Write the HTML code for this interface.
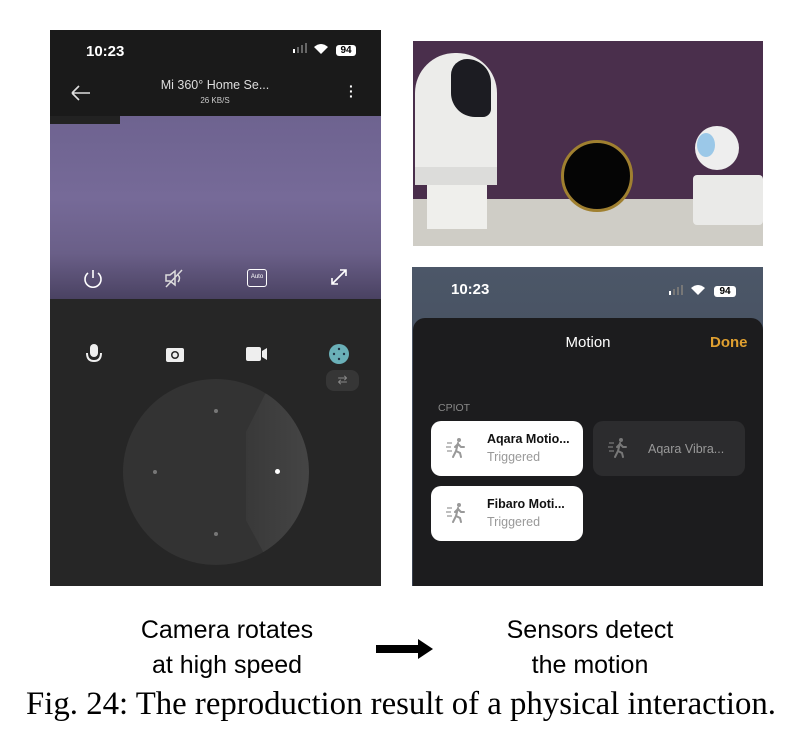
<!DOCTYPE html>
<html><head><meta charset="utf-8"><style>
*{margin:0;padding:0;box-sizing:border-box}
body{width:802px;height:734px;background:#fff;position:relative;overflow:hidden;font-family:"Liberation Sans",sans-serif}
.a{position:absolute}
.w{color:#fff}
</style></head><body>
<!-- left phone -->
<div class="a" style="left:50px;top:30px;width:331px;height:556px;background:#262626"></div>
<div class="a" style="left:50px;top:30px;width:331px;height:86px;background:#1a1a1a"></div>
<div class="a w" style="left:86px;top:43px;font-size:15px;font-weight:bold">10:23</div>
<div class="a" style="left:293px;top:49px;width:2px;height:4px;background:#fff"></div>
<div class="a" style="left:297px;top:47px;width:2px;height:6px;background:#666"></div>
<div class="a" style="left:301px;top:45px;width:2px;height:8px;background:#666"></div>
<div class="a" style="left:305px;top:43px;width:2px;height:10px;background:#666"></div>
<svg class="a" style="left:313px;top:43px" width="16" height="12"><path d="M8 11L1 4Q8 -2 15 4Z" fill="#fff"/></svg>
<div class="a" style="left:336px;top:45px;width:20px;height:11px;background:#fff;border-radius:3px;font-size:10px;font-weight:bold;text-align:center;line-height:11px;color:#000">94</div>
<svg class="a" style="left:70px;top:84px" width="22" height="18"><path d="M2 9H20M2 9L9 2M2 9L9 16" stroke="#ddd" stroke-width="1.6" fill="none"/></svg>
<div class="a" style="left:130px;top:78px;width:170px;text-align:center;color:#ddd;font-size:12.5px">Mi 360° Home Se...</div>
<div class="a" style="left:130px;top:96px;width:170px;text-align:center;color:#ccc;font-size:8px">26 KB/S</div>
<div class="a w" style="left:349px;top:84px;font-size:14px;font-weight:bold;line-height:5px">·<br>·<br>·</div>
<div class="a" style="left:50px;top:116px;width:331px;height:183px;background:linear-gradient(180deg,#6e6390 0%,#766a98 45%,#6a5f88 75%,#4a4262 100%)"></div>
<div class="a" style="left:50px;top:116px;width:70px;height:8px;background:#222"></div>
<svg class="a" style="left:82px;top:267px" width="22" height="22"><path d="M6 6A8 8 0 1 0 16 6M11 3V11" stroke="#fff" stroke-width="1.6" fill="none"/></svg>
<svg class="a" style="left:163px;top:267px" width="22" height="22"><path d="M3 8H7L12 4V18L7 14H3ZM3 20L19 3M15 8Q18 11 15 15" stroke="#ddd" stroke-width="1.5" fill="none"/></svg>
<div class="a" style="left:247px;top:269px;width:20px;height:18px;border:1.5px solid #fff;border-radius:3px;color:#fff;font-size:6px;text-align:center;line-height:15px">Auto</div>
<svg class="a" style="left:329px;top:267px" width="20" height="20"><path d="M3 17L17 3M11 3H17V9M3 11V17H9" stroke="#fff" stroke-width="1.6" fill="none"/></svg>
<svg class="a" style="left:84px;top:343px" width="20" height="22"><rect x="6" y="1" width="8" height="13" rx="4" fill="#eee"/><path d="M3 10Q3 18 10 18Q17 18 17 10" stroke="#eee" stroke-width="2" fill="none"/></svg>
<svg class="a" style="left:165px;top:345px" width="20" height="18"><rect x="1" y="3" width="18" height="14" rx="2" fill="#eee"/><circle cx="10" cy="10" r="4" fill="#262626"/><circle cx="10" cy="10" r="2.5" fill="#eee"/></svg>
<svg class="a" style="left:245px;top:345px" width="24" height="18"><rect x="1" y="2" width="15" height="14" rx="2" fill="#eee"/><path d="M17 6L22 3V15L17 12Z" fill="#eee"/></svg>
<svg class="a" style="left:329px;top:344px" width="20" height="20"><circle cx="10" cy="10" r="10" fill="#6ab0b8"/><circle cx="10" cy="5" r="1.2" fill="#234"/><circle cx="10" cy="15" r="1.2" fill="#234"/><circle cx="5" cy="10" r="1.2" fill="#234"/><circle cx="15" cy="10" r="1.2" fill="#234"/></svg>
<div class="a" style="left:326px;top:370px;width:33px;height:21px;border-radius:8px;background:#363636;color:#888;font-size:12px;text-align:center;line-height:21px">⇄</div>
<div class="a" style="left:123px;top:379px;width:186px;height:186px;border-radius:50%;background:#333;overflow:hidden">
 <div class="a" style="left:123px;top:-10px;width:80px;height:210px;background:linear-gradient(90deg,#393939,#484848);clip-path:polygon(40% 0,100% 0,100% 100%,40% 100%,0 72%,0 30%)"></div>
</div>
<div class="a" style="left:214px;top:409px;width:4px;height:4px;border-radius:50%;background:#777"></div>
<div class="a" style="left:153px;top:470px;width:4px;height:4px;border-radius:50%;background:#777"></div>
<div class="a" style="left:214px;top:532px;width:4px;height:4px;border-radius:50%;background:#777"></div>
<div class="a" style="left:275px;top:469px;width:5px;height:5px;border-radius:50%;background:#fff"></div>
<!-- photo -->
<div class="a" style="left:413px;top:41px;width:350px;height:205px;background:#4a2f4c;overflow:hidden">
 <div class="a" style="left:0;top:158px;width:350px;height:47px;background:#cfcdc6"></div>
 <div class="a" style="left:2px;top:12px;width:82px;height:128px;background:#ececea;border-radius:40px 40px 6px 6px"></div>
 <div class="a" style="left:2px;top:126px;width:82px;height:18px;background:#dcdcda"></div>
 <div class="a" style="left:38px;top:18px;width:40px;height:58px;background:#1c1c22;border-radius:20px 30px 10px 30px"></div>
 <div class="a" style="left:14px;top:144px;width:60px;height:44px;background:#efefec"></div>
 <div class="a" style="left:148px;top:99px;width:72px;height:72px;border-radius:50%;background:#050505;border:3px solid #a08030"></div>
 <div class="a" style="left:282px;top:85px;width:44px;height:44px;border-radius:50%;background:#eee"></div>
 <div class="a" style="left:284px;top:92px;width:18px;height:24px;border-radius:50%;background:#9bc8e8"></div>
 <div class="a" style="left:280px;top:134px;width:70px;height:50px;background:#eaeae8;border-radius:4px"></div>
</div>
<!-- right phone -->
<div class="a" style="left:412px;top:267px;width:351px;height:319px;background:linear-gradient(180deg,#4c5768,#3a4250)"></div>
<div class="a" style="left:413px;top:318px;width:350px;height:268px;background:#1c1c1e;border-radius:12px 12px 0 0"></div>
<div class="a w" style="left:451px;top:281px;font-size:15px;font-weight:bold">10:23</div>
<div class="a" style="left:669px;top:291px;width:2px;height:4px;background:#fff"></div>
<div class="a" style="left:673px;top:289px;width:2px;height:6px;background:#777"></div>
<div class="a" style="left:677px;top:287px;width:2px;height:8px;background:#777"></div>
<div class="a" style="left:681px;top:285px;width:2px;height:10px;background:#777"></div>
<svg class="a" style="left:690px;top:284px" width="16" height="12"><path d="M8 11L1 4Q8 -2 15 4Z" fill="#fff"/></svg>
<div class="a" style="left:714px;top:286px;width:22px;height:11px;background:#fff;border-radius:3px;font-size:10px;font-weight:bold;text-align:center;line-height:11px;color:#000">94</div>
<div class="a w" style="left:540px;top:334px;width:96px;text-align:center;font-size:15px">Motion</div>
<div class="a" style="left:710px;top:334px;font-size:15px;color:#e0a030;font-weight:bold">Done</div>
<div class="a" style="left:438px;top:402px;font-size:10.5px;color:#888">CPIOT</div>
<div class="a" style="left:431px;top:421px;width:152px;height:55px;background:#fff;border-radius:10px"></div>
<div class="a" style="left:593px;top:421px;width:152px;height:55px;background:#2c2c2e;border-radius:10px"></div>
<div class="a" style="left:431px;top:486px;width:152px;height:55px;background:#fff;border-radius:10px"></div>
<svg width="0" height="0" style="position:absolute"><defs><g id="wk"><path d="M1 6H6M0 10H5M1 14H6" stroke-width="1.2"/><circle cx="13" cy="3" r="2" stroke="none"/><path d="M12 6L10 14L7 20M10 14L14 16L15 20M12 7L9 10M12 7L15 10L18 10" stroke-width="2" fill="none" stroke-linecap="round"/></g></defs></svg>
<svg class="a" style="left:446px;top:437px" width="20" height="22"><use href="#wk" stroke="#999" fill="#999"/></svg>
<svg class="a" style="left:608px;top:437px" width="20" height="22"><use href="#wk" stroke="#777" fill="#777"/></svg>
<svg class="a" style="left:446px;top:502px" width="20" height="22"><use href="#wk" stroke="#999" fill="#999"/></svg>
<div class="a" style="left:487px;top:432px;font-size:12.5px;font-weight:bold;color:#111">Aqara Motio...</div>
<div class="a" style="left:487px;top:450px;font-size:12.5px;color:#999">Triggered</div>
<div class="a" style="left:648px;top:442px;font-size:12.5px;color:#999">Aqara Vibra...</div>
<div class="a" style="left:487px;top:497px;font-size:12.5px;font-weight:bold;color:#111">Fibaro Moti...</div>
<div class="a" style="left:487px;top:515px;font-size:12.5px;color:#999">Triggered</div>
<!-- captions -->
<div class="a" style="left:97px;top:613px;width:260px;text-align:center;font-size:25px;line-height:35px;color:#000">Camera rotates<br>at high speed</div>
<svg class="a" style="left:376px;top:637px" width="58" height="24"><path d="M0 8H42V2L57 12L42 22V16H0Z" fill="#000"/></svg>
<div class="a" style="left:460px;top:613px;width:260px;text-align:center;font-size:25px;line-height:35px;color:#000">Sensors detect<br>the motion</div>
<div class="a" style="left:0;top:686px;width:802px;text-align:center;font-family:'Liberation Serif',serif;font-size:32.8px;color:#000;white-space:nowrap">Fig. 24: The reproduction result of a physical interaction.</div>
</body></html>
